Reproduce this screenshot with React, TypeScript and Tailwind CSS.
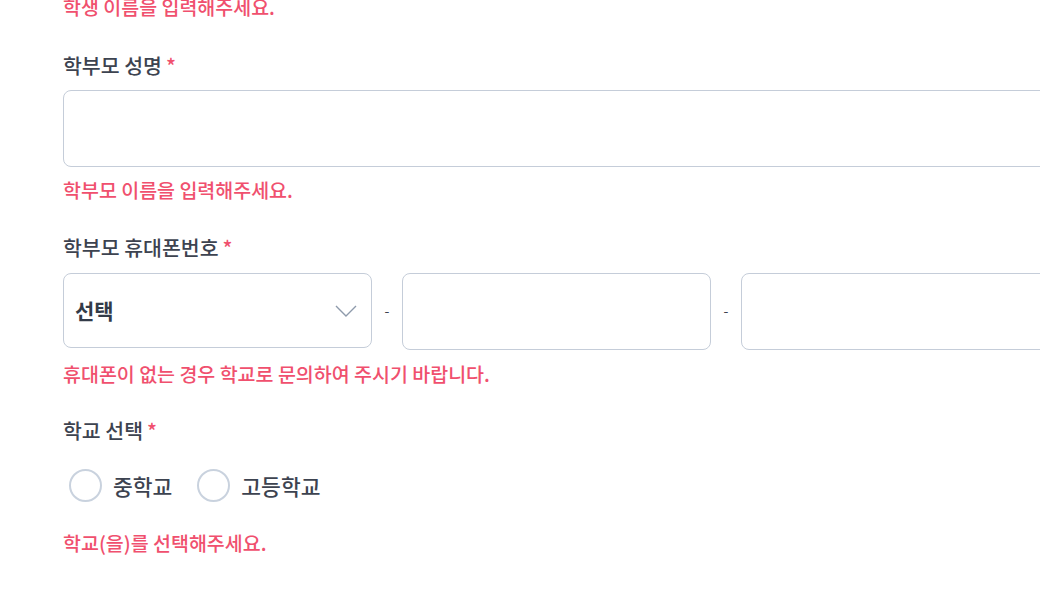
import React from "react";

const font = { fontFamily: '"Noto Sans CJK KR", "Noto Sans", sans-serif' };

function Label({ text }: { text: string }) {
  return (
    <div className="flex items-start text-[20.5px] leading-[27px] font-medium text-[#3d4350]">
      <span>{text}</span>
      <span className="ml-[4px] text-[#f0506e]">*</span>
    </div>
  );
}

function Err({ text }: { text: string }) {
  return <div className="text-[19.5px] leading-[27px] font-medium text-[#f0506e]">{text}</div>;
}

function Sep() {
  return (
    <div className="w-[30px] shrink-0 flex items-center justify-center h-[75px] text-[14px] text-[#3d4350]">
      -
    </div>
  );
}

function Radio({ text }: { text: string }) {
  return (
    <label className="flex items-center">
      <span className="w-[33px] h-[33px] rounded-full border-2 border-[#c9d2de] bg-white" />
      <span className="ml-[11px] text-[21.5px] leading-[30px] font-medium text-[#3d4350]">{text}</span>
    </label>
  );
}

export default function App() {
  return (
    <div className="w-[1040px] h-[597px] overflow-hidden bg-white" style={font}>
      <div className="pl-[63px] w-[1052px] -mt-[7px]">
        <Err text="학생 이름을 입력해주세요." />

        <div className="mt-[32px]">
          <Label text="학부모 성명" />
          <div className="mt-[11px] h-[77px] w-[989px] rounded-[8px] border border-[#c5cdd9] bg-white" />
          <div className="mt-[9px]">
            <Err text="학부모 이름을 입력해주세요." />
          </div>
        </div>

        <div className="mt-[31px]">
          <Label text="학부모 휴대폰번호" />
          <div className="mt-[12px] flex items-start w-[989px]">
            <div className="w-[309px] h-[75px] shrink-0 rounded-[8px] border border-[#c5cdd9] bg-white flex items-center justify-between pl-[11px] pr-[14px]">
              <span className="text-[21px] font-bold text-[#333b48]">선택</span>
              <svg width="22" height="12" viewBox="0 0 22 12" fill="none">
                <path d="M1 1L11 11L21 1" stroke="#8e9aab" strokeWidth="1.4" />
              </svg>
            </div>
            <Sep />
            <div className="w-[309px] h-[77px] shrink-0 rounded-[8px] border border-[#c5cdd9] bg-white" />
            <Sep />
            <div className="w-[309px] h-[77px] shrink-0 rounded-[8px] border border-[#c5cdd9] bg-white" />
          </div>
          <div className="mt-[10px]">
            <Err text="휴대폰이 없는 경우 학교로 문의하여 주시기 바랍니다." />
          </div>
        </div>

        <div className="mt-[30px]">
          <Label text="학교 선택" />
          <div className="mt-[25px] pl-[6px] flex items-center gap-[25px] h-[33px]">
            <Radio text="중학교" />
            <Radio text="고등학교" />
          </div>
          <div className="mt-[27px]">
            <Err text="학교(을)를 선택해주세요." />
          </div>
        </div>
      </div>
    </div>
  );
}
